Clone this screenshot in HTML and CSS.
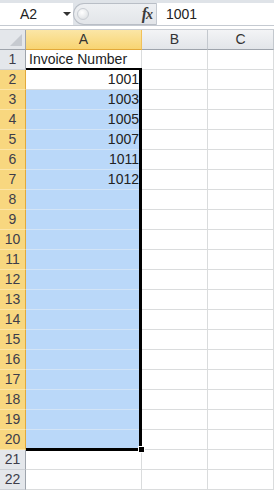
FILE: index.html
```html
<!DOCTYPE html>
<html lang="en">
<head>
  <meta charset="UTF-8">
  <title>Invoice Number – Sheet1</title>
  <link rel="stylesheet" href="styles.css">
</head>
<body>

  <div class="formula-bar">
    <div class="name-box">
      <span class="cell-ref">A2</span>
      <span class="caret"></span>
    </div>
    <div class="fx-area">
      <span class="knob"></span>
      <span class="fx"><i>f</i>x</span>
    </div>
    <div class="formula-input">1001</div>
  </div>
  <div class="bar-sep"></div>

  <div class="sheet">
    <!-- header row -->
    <div class="corner"></div>
    <div class="col-head active">A</div>
    <div class="col-head">B</div>
    <div class="col-head">C</div>

    <div class="row-head">1</div>
    <div class="cell">Invoice Number</div><div class="cell"></div><div class="cell"></div>

    <div class="row-head active">2</div>
    <div class="cell num current">1001</div><div class="cell"></div><div class="cell"></div>
    <div class="row-head active">3</div>
    <div class="cell num sel">1003</div><div class="cell"></div><div class="cell"></div>
    <div class="row-head active">4</div>
    <div class="cell num sel">1005</div><div class="cell"></div><div class="cell"></div>
    <div class="row-head active">5</div>
    <div class="cell num sel">1007</div><div class="cell"></div><div class="cell"></div>
    <div class="row-head active">6</div>
    <div class="cell num sel">1011</div><div class="cell"></div><div class="cell"></div>
    <div class="row-head active">7</div>
    <div class="cell num sel">1012</div><div class="cell"></div><div class="cell"></div>
    <div class="row-head active">8</div>
    <div class="cell sel"></div><div class="cell"></div><div class="cell"></div>
    <div class="row-head active">9</div>
    <div class="cell sel"></div><div class="cell"></div><div class="cell"></div>
    <div class="row-head active">10</div>
    <div class="cell sel"></div><div class="cell"></div><div class="cell"></div>
    <div class="row-head active">11</div>
    <div class="cell sel"></div><div class="cell"></div><div class="cell"></div>
    <div class="row-head active">12</div>
    <div class="cell sel"></div><div class="cell"></div><div class="cell"></div>
    <div class="row-head active">13</div>
    <div class="cell sel"></div><div class="cell"></div><div class="cell"></div>
    <div class="row-head active">14</div>
    <div class="cell sel"></div><div class="cell"></div><div class="cell"></div>
    <div class="row-head active">15</div>
    <div class="cell sel"></div><div class="cell"></div><div class="cell"></div>
    <div class="row-head active">16</div>
    <div class="cell sel"></div><div class="cell"></div><div class="cell"></div>
    <div class="row-head active">17</div>
    <div class="cell sel"></div><div class="cell"></div><div class="cell"></div>
    <div class="row-head active">18</div>
    <div class="cell sel"></div><div class="cell"></div><div class="cell"></div>
    <div class="row-head active">19</div>
    <div class="cell sel"></div><div class="cell"></div><div class="cell"></div>
    <div class="row-head active">20</div>
    <div class="cell sel"></div><div class="cell"></div><div class="cell"></div>

    <div class="row-head">21</div>
    <div class="cell"></div><div class="cell"></div><div class="cell"></div>
    <div class="row-head">22</div>
    <div class="cell"></div><div class="cell"></div><div class="cell"></div>

    <!-- selection outline A2:A20 -->
    <div class="selection"></div>
    <div class="fill-handle"></div>
  </div>

</body>
</html>
```

FILE: styles.css
```css
:root {
  --grid: #dadcdd;
  --head-bg: #e4e7eb;
  --head-line: #c3c8ce;
  --gold: #f8d77f;
  --gold-line: #f1c15a;
  --sel-bg: #bad8f9;
  --text: #222;
}

* { box-sizing: border-box; }

body {
  margin: 0;
  width: 274px;
  height: 490px;
  overflow: hidden;
  background: #fff;
  font-family: 'Liberation Sans', Arial, sans-serif;
  font-size: 14px;
  color: var(--text);
}

/* formula bar */
.formula-bar {
  display: flex;
  height: 25px;
  padding-top: 3px;
  background: #dfe3e8;
}

.name-box {
  width: 73px;
  background: #fff;
  display: flex;
  align-items: center;
  padding-left: 20px;
}

.cell-ref { line-height: 20px; }

.caret {
  margin-left: 26px;
  width: 0;
  height: 0;
  border-left: 4px solid transparent;
  border-right: 4px solid transparent;
  border-top: 4px solid #333;
}

.fx-area {
  width: 84px;
  display: flex;
  align-items: center;
  background: linear-gradient(#eef0f3, #e2e5e9);
  border: 1px solid #b9bec6;
  border-right: 1px solid #c4c9d0;
  border-radius: 11px 0 0 11px;
  padding-left: 3px;
}

.knob {
  width: 12px;
  height: 12px;
  border-radius: 50%;
  border: 1px solid #c9cdd3;
  background: radial-gradient(circle at 40% 35%, #fff, #d6dade);
}

.fx {
  margin-left: auto;
  margin-right: 4px;
  font-family: 'Liberation Serif', serif;
  font-style: italic;
  font-weight: bold;
  font-size: 14px;
  color: #3a3a3a;
  letter-spacing: -1px;
}

.fx i { font-size: 16px; }

.formula-input {
  flex: 1;
  background: #fff;
  padding-left: 9px;
  line-height: 22px;
}

.bar-sep {
  height: 5px;
  background: #fff;
  border-top: 1px solid #c5cad1;
  border-bottom: 1px solid #c9cdd3;
}

/* grid */
.sheet {
  position: relative;
  display: grid;
  grid-template-columns: 26px 116px 66px 66px;
  grid-auto-rows: 20px;
}

.corner {
  position: relative;
  background: var(--head-bg);
  border-right: 1px solid #9ea4ac;
  border-bottom: 1px solid #9ea4ac;
}

.corner::after {
  content: "";
  position: absolute;
  right: 3px;
  bottom: 3px;
  width: 0;
  height: 0;
  border-left: 12px solid transparent;
  border-bottom: 12px solid #c6cad0;
}

.col-head {
  background: linear-gradient(#f3f4f6, #e2e5e9);
  border-right: 1px solid var(--head-line);
  border-bottom: 1px solid #9ea4ac;
  text-align: center;
  line-height: 19px;
  color: #333;
}

.col-head.active {
  background: linear-gradient(#fbe6a6, #f8d472);
  border-right-color: var(--gold-line);
  border-bottom-color: #e2a93a;
}

.row-head {
  background: var(--head-bg);
  border-right: 1px solid #9ea4ac;
  border-bottom: 1px solid #cdd1d6;
  text-align: center;
  line-height: 19px;
  color: #3d3d4a;
}

.row-head.active {
  background: var(--gold);
  border-bottom-color: #fbe5a9;
  border-right-color: #e2a93a;
}

.cell {
  border-right: 1px solid var(--grid);
  border-bottom: 1px solid var(--grid);
  line-height: 17px;
  padding: 1px 3px 0 3px;
  white-space: nowrap;
  overflow: hidden;
}

.cell.num {
  text-align: right;
  padding-right: 2px;
}

.cell.sel {
  background: var(--sel-bg);
  border-bottom-color: #d3e4f6;
}

.cell.current { background: #fff; }

.selection {
  position: absolute;
  left: 26px;
  top: 38px;
  width: 116px;
  height: 383px;
  border-top: 2px solid #000;
  border-right: 3px solid #000;
  border-bottom: 3px solid #000;
  pointer-events: none;
}

.fill-handle {
  position: absolute;
  left: 138px;
  top: 416px;
  width: 7px;
  height: 7px;
  background: #000;
  border: 1px solid #fff;
}
```
